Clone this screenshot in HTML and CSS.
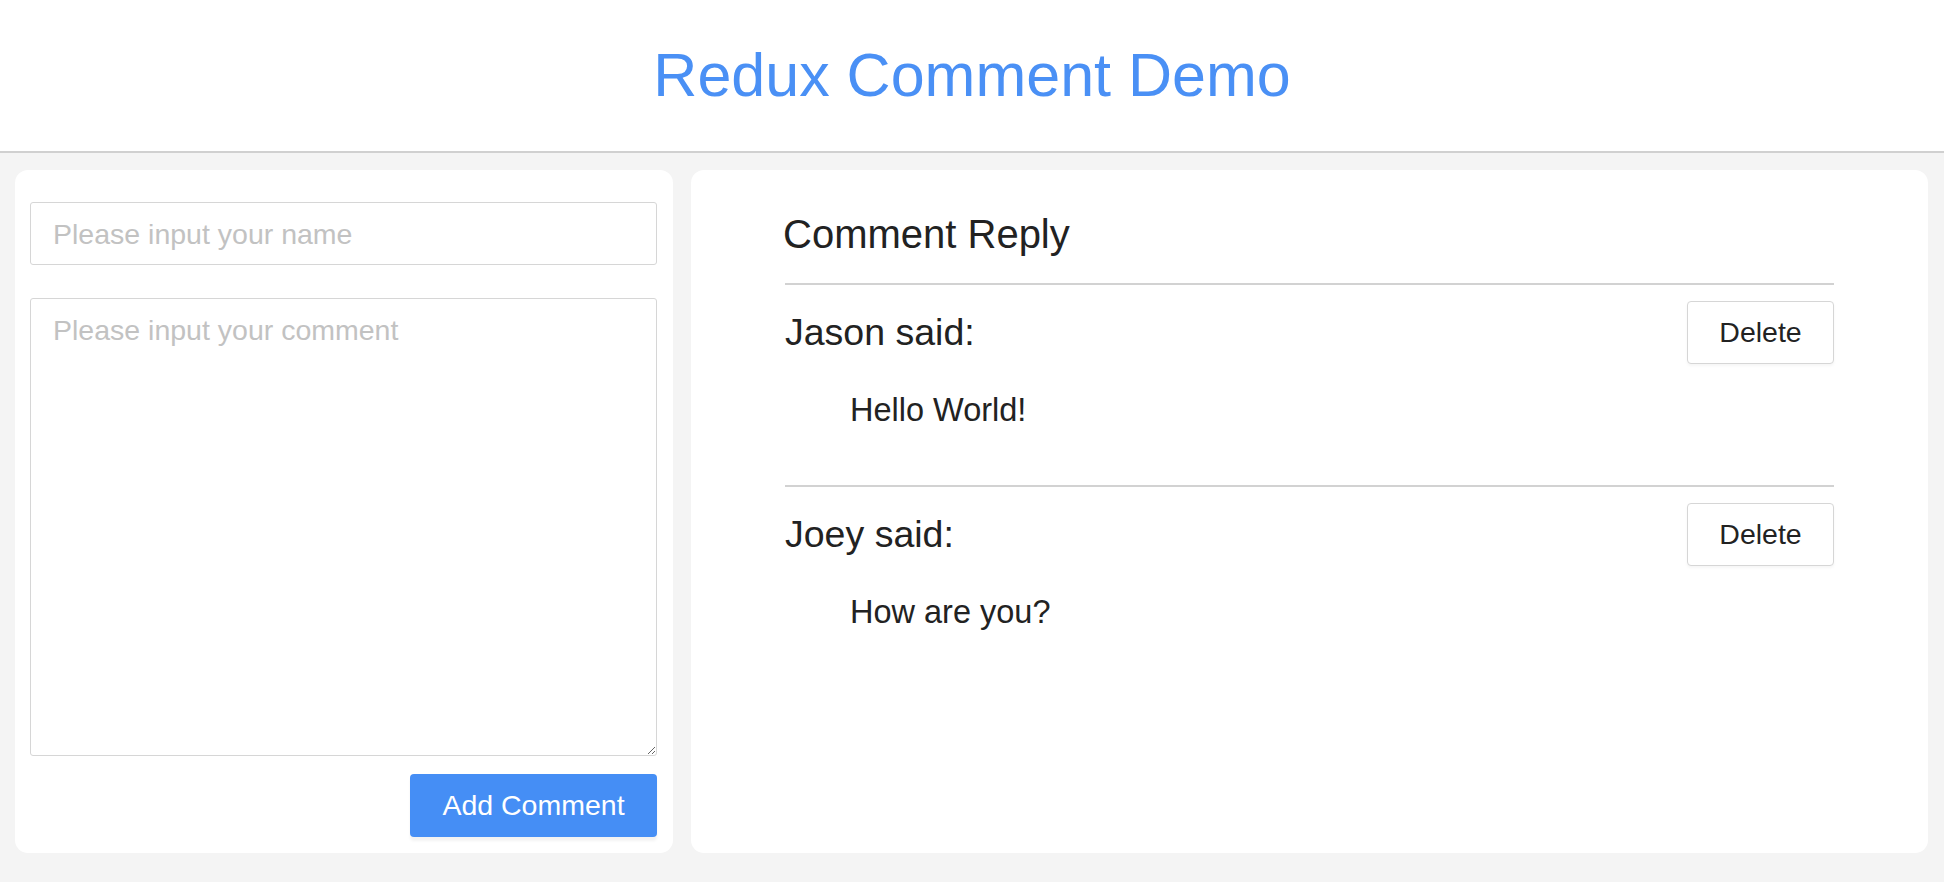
FILE: index.html
```html
<!DOCTYPE html>
<html lang="en">
<head>
<meta charset="utf-8">
<title>Redux Comment Demo</title>
<link rel="stylesheet" href="styles.css">
</head>
<body>
<header class="top">
  <h1 class="title">Redux Comment Demo</h1>
</header>
<main class="main">
  <section class="card form-card">
    <input class="field name-field" type="text" placeholder="Please input your name">
    <textarea class="field comment-field" placeholder="Please input your comment"></textarea>
    <div class="actions">
      <button class="btn-primary" type="button">Add Comment</button>
    </div>
  </section>
  <section class="card list-card">
    <div class="list">
      <h2 class="list-title">Comment Reply</h2>
      <div class="comment">
        <div class="comment-head">
          <h3 class="author">Jason said:</h3>
          <button class="btn-delete" type="button">Delete</button>
        </div>
        <p class="comment-text">Hello World!</p>
      </div>
      <div class="comment">
        <div class="comment-head">
          <h3 class="author">Joey said:</h3>
          <button class="btn-delete" type="button">Delete</button>
        </div>
        <p class="comment-text">How are you?</p>
      </div>
    </div>
  </section>
</main>
</body>
</html>
```

FILE: styles.css
```css
* { box-sizing: border-box; }

html, body {
  margin: 0;
  padding: 0;
  height: 100%;
}

body {
  background: #f4f4f4;
  font-family: "Liberation Sans", Arial, Helvetica, sans-serif;
  color: #222;
}

.top {
  height: 153px;
  background: #fff;
  border-bottom: 2px solid #d0d0d0;
  display: flex;
  align-items: center;
  justify-content: center;
}

.title {
  margin: 0;
  font-size: 61px;
  font-weight: 400;
  color: #4a90f5;
  line-height: 72px;
  padding-bottom: 1px;
}

.main {
  display: flex;
  gap: 18px;
  padding: 17px 16px 29px 15px;
  height: 729px;
}

.card {
  background: #fff;
  border-radius: 13px;
}

.form-card {
  width: 658px;
  flex: none;
  padding: 32px 16px 16px 15px;
  display: flex;
  flex-direction: column;
}

.field {
  display: block;
  width: 100%;
  border: 1.5px solid #d6d6d6;
  border-radius: 3px;
  font-family: "Liberation Sans", Arial, Helvetica, sans-serif;
  font-size: 28.5px;
  color: #222;
  background: #fff;
  outline: none;
}

.field::placeholder {
  color: #c2c2c2;
}

.name-field {
  height: 63px;
  padding: 2px 22px 0;
}

.comment-field {
  margin-top: 33px;
  height: 458px;
  padding: 15px 22px;
  line-height: 32px;
  resize: vertical;
}

.actions {
  display: flex;
  justify-content: flex-end;
  margin-top: 18px;
}

.btn-primary {
  width: 247px;
  height: 63px;
  border: none;
  border-radius: 4px;
  background: #458ef5;
  color: #fff;
  font-family: "Liberation Sans", Arial, Helvetica, sans-serif;
  font-size: 28.5px;
  box-shadow: 0 4px 3px rgba(0, 0, 0, 0.05);
  cursor: pointer;
}

.list-card {
  flex: 1;
  padding: 41px 0 0 0;
}

.list {
  width: 1049px;
  margin: 0 auto;
}

.list-title {
  margin: 0 0 26px -2px;
  font-size: 40px;
  font-weight: 400;
  line-height: 46px;
  color: #222;
}

.comment {
  border-top: 2px solid #d2d2d2;
  padding-top: 16px;
}

.comment-head {
  display: flex;
  justify-content: space-between;
  align-items: center;
}

.author {
  margin: 0;
  font-size: 37.5px;
  font-weight: 400;
  line-height: 43px;
  color: #222;
}

.btn-delete {
  width: 147px;
  height: 63px;
  background: #fff;
  border: 1.5px solid #d6d6d6;
  border-radius: 4px;
  font-family: "Liberation Sans", Arial, Helvetica, sans-serif;
  font-size: 28.5px;
  color: #222;
  box-shadow: 0 2px 3px rgba(0, 0, 0, 0.04);
  cursor: pointer;
}

.comment-text {
  margin: 28px 0 56px 65px;
  font-size: 32.5px;
  line-height: 37px;
  color: #222;
}
```
